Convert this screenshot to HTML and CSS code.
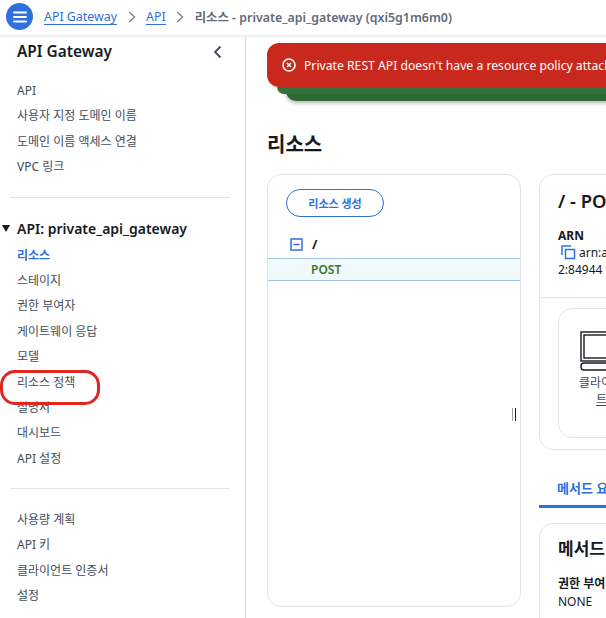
FILE: index.html
```html
<!DOCTYPE html>
<html lang="ko">
<head>
<meta charset="utf-8">
<title>API Gateway</title>
<link rel="stylesheet" href="styles.css">
</head>
<body>
<header class="topbar">
  <button class="menu-btn" aria-label="menu">
    <svg width="14" height="12" viewBox="0 0 14 12"><path d="M1 1.5h12M1 6h12M1 10.5h12" stroke="#fff" stroke-width="2" stroke-linecap="round" fill="none"/></svg>
  </button>
  <nav class="crumbs">
    <a class="crumb-link">API Gateway</a>
    <svg class="chev" width="8" height="12" viewBox="0 0 8 12"><path d="M1.2 1l5.3 5-5.3 5" stroke="#7d8998" stroke-width="1.5" fill="none"/></svg>
    <a class="crumb-link">API</a>
    <svg class="chev" width="8" height="12" viewBox="0 0 8 12"><path d="M1.2 1l5.3 5-5.3 5" stroke="#7d8998" stroke-width="1.5" fill="none"/></svg>
    <span class="crumb-current">리소스 - private_api_gateway (qxi5g1m6m0)</span>
  </nav>
</header>
<div class="body">
  <aside class="sidebar">
    <div class="side-head">
      <h2>API Gateway</h2>
      <svg width="9" height="14" viewBox="0 0 9 14"><path d="M7.5 1.5L2 7l5.5 5.5" stroke="#414d5c" stroke-width="1.8" fill="none"/></svg>
    </div>
    <ul class="nav first">
      <li>API</li>
      <li>사용자 지정 도메인 이름</li>
      <li>도메인 이름 액세스 연결</li>
      <li>VPC 링크</li>
    </ul>
    <hr class="rule rule-a">
    <div class="api-title"><span class="tri"></span>API: private_api_gateway</div>
    <ul class="nav">
      <li class="active">리소스</li>
      <li>스테이지</li>
      <li>권한 부여자</li>
      <li>게이트웨이 응답</li>
      <li>모델</li>
      <li class="circled">리소스 정책</li>
      <li>설명서</li>
      <li>대시보드</li>
      <li>API 설정</li>
    </ul>
    <hr class="rule rule-b">
    <ul class="nav">
      <li>사용량 계획</li>
      <li>API 키</li>
      <li>클라이언트 인증서</li>
      <li>설정</li>
    </ul>
  </aside>
  <main class="main">
    <div class="flash">
      <div class="flash-red">
        <svg width="14" height="14" viewBox="0 0 14 14"><circle cx="7" cy="7" r="6" stroke="#fff" stroke-width="1.6" fill="none"/><path d="M5 5l4 4M9 5l-4 4" stroke="#fff" stroke-width="1.6"/></svg>
        <span>Private REST API doesn't have a resource policy attached to it.</span>
      </div>
    </div>
    <h1>리소스</h1>
    <div class="columns">
      <section class="card tree">
        <button class="create">리소스 생성</button>
        <div class="root-row">
          <svg width="13" height="13" viewBox="0 0 13 13"><rect x="1" y="1" width="11" height="11" stroke="#2f6fde" stroke-width="1.5" fill="none"/><path d="M3.5 6.5h6" stroke="#2f6fde" stroke-width="1.5"/></svg>
          <b>/</b>
        </div>
        <div class="post-row">POST</div>
        <span class="grip"></span>
      </section>
      <div class="detail">
        <section class="card method">
          <h3>/ - POST - 메서드 실행</h3>
          <div class="arn">
            <b>ARN</b>
            <div class="arn-line">
              <svg width="15" height="15" viewBox="0 0 15 15"><path d="M1 10V1h9" stroke="#2f6fde" stroke-width="1.5" fill="none"/><rect x="4.5" y="4.5" width="9" height="9" stroke="#2f6fde" stroke-width="1.5" fill="none"/></svg>
              <span>arn:aws:execute-api:ap-northeast-</span>
            </div>
            <div class="arn-wrap">2:84944</div>
          </div>
          <div class="flow">
            <div class="client">
              <svg width="60" height="40" viewBox="0 0 60 40"><rect x="1" y="1" width="50" height="29" stroke="#16191f" stroke-width="1.4" fill="none"/><rect x="4" y="4" width="44" height="23" stroke="#16191f" stroke-width="1.4" fill="none"/><rect x="1" y="32" width="50" height="7" rx="3" stroke="#16191f" stroke-width="1.4" fill="none"/></svg>
              <div class="client-name">클라이언트 테스</div>
              <div class="client-link">트</div>
            </div>
          </div>
        </section>
        <div class="tabs"><span class="tab">메서드 요청</span></div>
        <section class="card settings">
          <h4>메서드 요청 설정</h4>
          <b>권한 부여</b>
          <div>NONE</div>
        </section>
      </div>
    </div>
  </main>
</div>
</body>
</html>
```
FILE: styles.css
```css
* { box-sizing: border-box; }
html, body { margin: 0; padding: 0; height: 618px; overflow: hidden; background: #fff; }
body { font-family: "Noto Sans", "Noto Sans CJK KR", sans-serif; color: #16191f; font-size: 12px; }
ul { list-style: none; margin: 0; padding: 0; }
h1, h2, h3, h4 { margin: 0; }

.topbar { height: 37px; display: flex; align-items: center; padding: 0 0 2px 6px; border-bottom: 2px solid #eceef0; gap: 11px; }
.menu-btn { width: 27px; height: 27px; border-radius: 50%; border: 0; background: #2f6fde; display: flex; align-items: center; justify-content: center; padding: 0; }
.crumbs { display: flex; align-items: center; gap: 10.5px; font-size: 12.4px; white-space: nowrap; }
.crumb-link { color: #2f6fde; border-bottom: 1px solid #2f6fde; line-height: 15px; }
.crumb-current { color: #5f6b7a; font-weight: 600; }

.body { display: flex; height: 581px; }
.sidebar { width: 246px; flex: none; border-right: 1px solid #d5dbdb; position: relative; }
.side-head { display: flex; justify-content: space-between; align-items: center; padding: 1px 23px 0 17px; height: 28px; }
.side-head h2 { font-size: 15.4px; font-weight: 600; }
.nav li { height: 25.4px; line-height: 25px; padding-left: 17px; color: #414d5c; font-size: 12px; }
.nav.first { margin-top: 13px; }
.nav .active { color: #2f6fde; font-weight: 600; }
.circled { position: relative; }
.circled::after { content: ""; position: absolute; left: 0; top: 0; width: 94px; height: 29px; border: 3px solid #e0261f; border-radius: 15px; }
.rule { border: 0; border-top: 1px solid #e2e5e8; margin: 0 15px 0 10px; }
.rule-a { margin-top: 17px; }
.rule-b { margin-top: 17px; margin-bottom: 18px; }
.api-title { font-size: 14px; font-weight: 600; display: flex; align-items: center; margin-top: 20px; margin-bottom: 3px; height: 22px; padding-left: 2px; gap: 7px; }
.tri { width: 0; height: 0; border-left: 4.5px solid transparent; border-right: 4.5px solid transparent; border-top: 7px solid #16191f; }

.main { flex: 1; min-width: 0; padding: 6px 0 0 21px; overflow: hidden; }
.flash { height: 58px; width: 400px; background: #2c682f; margin-left: 19px; position: relative; box-shadow: 0 2px 4px rgba(0,0,0,.3); border-radius: 0 0 0 10px; }
.flash-red { position: absolute; top: 0; left: -19px; width: 420px; height: 44px; background: #c9291d; border-radius: 12px; color: #fff; display: flex; align-items: center; gap: 8px; padding-left: 15px; font-size: 12.2px; white-space: nowrap; }
.flash-red::after { content: ""; position: absolute; left: 10px; right: 0; top: 44px; height: 7px; background: #34713a; border-radius: 0 0 0 8px; }
h1 { font-size: 20px; font-weight: 600; margin-top: 29px; height: 44px; line-height: 30px; }
.columns { display: flex; gap: 18px; margin-top: 0; width: 700px; }
.card { border: 1px solid #e2e5e8; border-radius: 14px; background: #fff; }
.tree { width: 254px; height: 433px; position: relative; padding-top: 14px; }
.create { display: block; margin-left: 18px; width: 98px; height: 28px; border-radius: 14px; border: 1.5px solid #2f6fde; background: #fff; color: #2f6fde; font: 600 11px "Noto Sans", "Noto Sans CJK KR", sans-serif; padding: 0; }
.root-row { display: flex; align-items: center; gap: 9px; height: 41px; padding: 13px 0 0 22px; font-size: 13px; }
.post-row { height: 23px; line-height: 21px; background: #f1f9fd; border-top: 1px solid #9cc3e6; border-bottom: 1px solid #9cc3e6; padding-left: 43px; color: #3b7a2a; font-weight: 600; font-size: 12px; }
.grip { position: absolute; left: 244px; top: 233px; width: 4px; height: 13px; border-left: 1px solid #9aa0a8; border-right: 1.5px solid #16191f; }
.detail { width: 420px; }
.method { height: 276px; width: 420px; padding-top: 14px; }
.method h3 { font-size: 18.4px; font-weight: 600; padding-left: 18px; height: 30px; line-height: 24px; white-space: nowrap; }
.arn { padding: 8px 0 0 18px; height: 79px; border-bottom: 1px solid #e2e5e8; line-height: 17px; white-space: nowrap; }
.arn-line { display: flex; align-items: center; gap: 3px; padding-left: 3px; }
.flow { padding: 10px 0 0 18px; }
.client { width: 150px; height: 130px; border: 1px solid #e2e5e8; border-radius: 14px; padding: 22px 0 0 21px; }
.client svg { display: block; }
.client-name { margin: 3px 0 0 -1px; color: #414d5c; line-height: 17px; white-space: nowrap; }
.client-link { margin-left: 16px; line-height: 17px; color: #414d5c; text-decoration: underline; }
.tabs { height: 73px; padding: 28px 0 0 18px; font-weight: 600; color: #2f6fde; font-size: 13px; }
.tab { display: block; height: 30px; margin-left: -18px; padding-left: 18px; border-bottom: 3px solid #2f6fde; white-space: nowrap; }
.settings { height: 200px; padding: 13px 0 0 18px; line-height: 18px; }
.settings h4 { font-size: 17px; font-weight: 600; height: 38px; line-height: 24px; white-space: nowrap; }
```
